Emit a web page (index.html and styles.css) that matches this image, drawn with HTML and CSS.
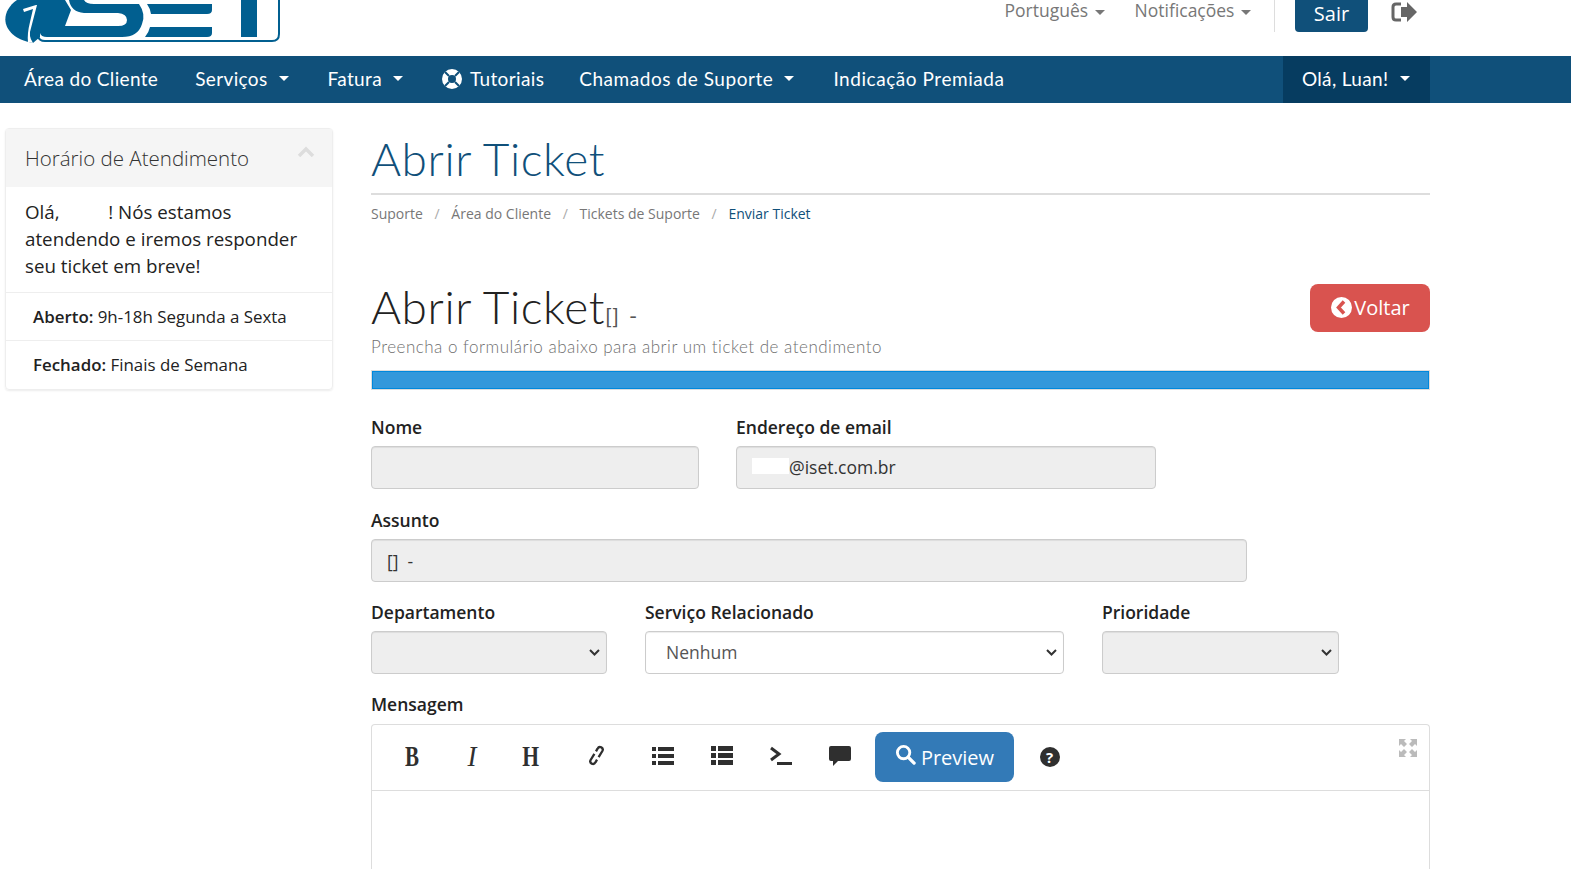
FILE: index.html
```html
<!DOCTYPE html>
<html lang="pt-BR">
<head>
    <meta charset="UTF-8">
    <title>Abrir Ticket</title>
    <link rel="stylesheet" href="styles.css">
</head>
<body>
    <header class="top">
        <svg class="logo" width="285" height="44" viewBox="0 0 285 44">
            <path fill="#015f90" d="M17 0C-3 14 3 38 33 43L40 37V0Z"/>
            <path fill="#fff" d="M23 9L36 5L37 5L31 28Q28 36 33 43L28 42Q27 34 30 22L33 9L24 12Z"/>
            <path fill="#015f90" d="M38 0H84Q86 4 94 4H139Q146 14 142 24Q138 37 122 37H47Q41 37 40 33L36 20Z"/>
            <path fill="#fff" d="M65 0H69Q71 12 84 13H118Q127 14 127 20Q127 26 118 26H65L71 10Z"/>
            <path fill="#015f90" d="M147 4H212V10Q212 14 207 14H151Q150 8 147 4ZM150 27H212V33Q212 37 207 37H145Q149 32 150 27ZM241 0H257V37H241Z"/>
            <path fill="none" stroke="#015f90" stroke-width="2" d="M38 33V36Q39 41 45 41H272Q279 41 279 34V0"/>
        </svg>
        <div class="top-right">
            <a class="top-link">Português <span class="caret"></span></a>
            <a class="top-link">Notificações <span class="caret"></span></a>
            <span class="top-sep"></span>
            <a class="btn-sair">Sair</a>
            <svg class="logout-icon" width="26" height="22" viewBox="0 0 26 22">
                <path fill="#666" d="M10 6H16V1L26 11L16 21V16H10Z"/>
                <path fill="none" stroke="#666" stroke-width="3" d="M10 3H5Q2 3 2 6V16Q2 19 5 19H10"/>
            </svg>
        </div>
    </header>

    <nav class="navbar">
        <a class="nav-item">Área do Cliente</a>
        <a class="nav-item">Serviços <span class="caret"></span></a>
        <a class="nav-item">Fatura <span class="caret"></span></a>
        <a class="nav-item nav-tut">
            <svg class="nav-icon" width="20" height="20" viewBox="0 0 20 20">
                <circle cx="10" cy="10" r="7" fill="none" stroke="#fff" stroke-width="6"/>
                <path stroke="#10507a" stroke-width="2" d="M3 3L7 7M17 3L13 7M3 17L7 13M17 17L13 13"/>
            </svg>
            Tutoriais
        </a>
        <a class="nav-item nav-wide">Chamados de Suporte <span class="caret"></span></a>
        <a class="nav-item nav-wide">Indicação Premiada</a>
        <a class="nav-item nav-user">Olá, Luan! <span class="caret"></span></a>
    </nav>

    <div class="page">
        <aside class="panel">
            <div class="panel-head">
                <span>Horário de Atendimento</span>
                <svg width="18" height="11" viewBox="0 0 18 11">
                    <path fill="none" stroke="#ddd" stroke-width="3.5" d="M2 10L9 3L16 10"/>
                </svg>
            </div>
            <p class="panel-text">Olá,&nbsp;&nbsp;&nbsp;&nbsp;&nbsp;&nbsp;&nbsp;&nbsp;&nbsp;&nbsp;! Nós estamos atendendo e iremos responder seu ticket em breve!</p>
            <div class="panel-row"><b>Aberto:</b> 9h-18h Segunda a Sexta</div>
            <div class="panel-row"><b>Fechado:</b> Finais de Semana</div>
        </aside>

        <main class="content">
            <h1 class="page-title">Abrir Ticket</h1>
            <ol class="crumbs">
                <li>Suporte</li>
                <li>Área do Cliente</li>
                <li>Tickets de Suporte</li>
                <li class="active">Enviar Ticket</li>
            </ol>

            <div class="ticket-head">
                <div>
                    <h2 class="ticket-title">Abrir Ticket<small>[] -</small></h2>
                    <p class="ticket-sub">Preencha o formulário abaixo para abrir um ticket de atendimento</p>
                </div>
                <a class="btn-voltar">
                    <svg width="21" height="21" viewBox="0 0 21 21">
                        <circle cx="10.5" cy="10.5" r="10.5" fill="#fff"/>
                        <path fill="none" stroke="#d9534f" stroke-width="3.5" d="M13 4.5L7.5 10.5L13 16.5"/>
                    </svg>Voltar
                </a>
            </div>
            <div class="blue-bar"></div>

            <form>
                <div class="row row-first">
                    <div class="field w-nome">
                        <label>Nome</label>
                        <input class="input" disabled>
                    </div>
                    <div class="field w-email">
                        <label>Endereço de email</label>
                        <div class="input email-box"><span class="mask"></span>@iset.com.br</div>
                    </div>
                </div>
                <div class="row">
                    <div class="field w-assunto">
                        <label>Assunto</label>
                        <input class="input" value="[]  -" disabled>
                    </div>
                </div>
                <div class="row row-select">
                    <div class="field w-sel">
                        <label>Departamento</label>
                        <select class="input" disabled><option></option></select>
                    </div>
                    <div class="field w-serv">
                        <label>Serviço Relacionado</label>
                        <select class="input on"><option>Nenhum</option></select>
                    </div>
                    <div class="field w-prio">
                        <label>Prioridade</label>
                        <select class="input" disabled><option></option></select>
                    </div>
                </div>

                <label class="msg-label">Mensagem</label>
                <div class="editor">
                    <div class="toolbar">
                        <span class="tool"><span class="glyph glyph-b">B</span></span>
                        <span class="tool"><span class="glyph glyph-i">I</span></span>
                        <span class="tool"><span class="glyph glyph-h">H</span></span>
                        <span class="tool tool-link">
                            <svg width="15" height="21" viewBox="0 0 14 20">
                                <g fill="none" stroke="#2f2f2f" stroke-width="2.200">
                                    <path d="M6.500 6L8 3.500Q9.200 1.200 11.500 2.200Q13.800 3.600 12.600 5.700L9 11.500"/>
                                    <path d="M7.500 14L6 16.500Q4.800 18.800 2.500 17.800Q.2 16.400 1.400 14.300L5 8.500"/>
                                </g>
                            </svg>
                        </span>
                        <span class="tool">
                            <svg width="22" height="20" viewBox="0 0 22 20">
                                <path fill="#2f2f2f" d="M0 1H4V5H0ZM6 1H22V5H6ZM0 8H4V12H0ZM6 8H22V12H6ZM0 15H4V19H0ZM6 15H22V19H6Z"/>
                            </svg>
                        </span>
                        <span class="tool">
                            <svg width="22" height="20" viewBox="0 0 22 20">
                                <path fill="#2f2f2f" d="M0 0H5V5H0ZM7 0H22V5H7ZM0 7H5V12H0ZM7 7H22V12H7ZM0 14H5V19H0ZM7 14H22V19H7Z"/>
                            </svg>
                        </span>
                        <span class="tool">
                            <svg width="22" height="20" viewBox="0 0 22 20">
                                <path fill="none" stroke="#2f2f2f" stroke-width="3" d="M1 2L9 8L1 14"/>
                                <path fill="#2f2f2f" d="M7 16H22V19H7Z"/>
                            </svg>
                        </span>
                        <span class="tool">
                            <svg width="22" height="20" viewBox="0 0 22 20">
                                <path fill="#2f2f2f" d="M2 0H20Q22 0 22 2V13Q22 15 20 15H9L4 20V15H2Q0 15 0 13V2Q0 0 2 0Z"/>
                            </svg>
                        </span>
                        <a class="btn-preview">
                            <svg width="21" height="21" viewBox="0 0 22 22">
                                <circle cx="9" cy="9" r="6.500" fill="none" stroke="#fff" stroke-width="3"/>
                                <path stroke="#fff" stroke-width="3.500" stroke-linecap="round" d="M14 14L20 20"/>
                            </svg>
                            Preview
                        </a>
                        <span class="tool tool-help"><span class="help-dot">?</span></span>
                        <svg class="tool-full" width="20" height="20" viewBox="0 0 20 20">
                            <path fill="#bbb" d="M1 1H8L6 3L9 6L6 9L3 6L1 8ZM19 1V8L17 6L14 9L11 6L14 3L12 1ZM1 19V12L3 14L6 11L9 14L6 17L8 19ZM19 19H12L14 17L11 14L14 11L17 14L19 12Z"/>
                        </svg>
                    </div>
                </div>
            </form>
        </main>
    </div>
</body>
</html>
```

FILE: styles.css
```css
html, body {
    height: 869px;
    overflow: hidden;
}
body {
    margin: 0;
    background: #fff;
    color: #222;
    font-family: "Open Sans", sans-serif;
}
.caret {
    display: inline-block;
    width: 0;
    height: 0;
    margin-left: 2px;
    vertical-align: middle;
    border-top: 5px solid currentColor;
    border-left: 5px solid transparent;
    border-right: 5px solid transparent;
}

/* top */
.top {
    display: flex;
    justify-content: space-between;
    height: 56px;
}
.top-right {
    display: flex;
    align-items: flex-start;
    margin-right: 154px;
    height: 32px;
}
.top-link {
    color: #777;
    font-size: 17.500px;
    line-height: 20px;
    margin-right: 30px;
}
.top-link + .top-link {
    margin-right: 23px;
}
.top-sep {
    width: 1px;
    height: 32px;
    background: #ddd;
    margin-right: 20px;
}
.btn-sair {
    width: 73px;
    height: 32px;
    line-height: 27px;
    text-align: center;
    font-size: 20px;
    color: #fff;
    background: #10507a;
    border-radius: 0 0 4px 4px;
}
.logout-icon {
    margin: 1px 0 0 23px;
}

/* menu */
.navbar {
    display: flex;
    height: 47px;
    padding-left: 5.500px;
    background: #10507a;
    color: #fff;
    font-family: Lato, sans-serif;
    font-size: 19px;
    letter-spacing: 0.35px;
}
.nav-item {
    display: flex;
    align-items: center;
    padding: 0 18.500px 2px;
}
.nav-icon {
    margin-right: 8px;
}
.nav-item .caret {
    margin: 0 2px 0 11px;
}
.nav-tut {
    padding-right: 16.500px;
}
.nav-wide {
    letter-spacing: 0.55px;
}
.nav-user {
    margin-left: auto;
    margin-right: 141px;
    background: #063c60;
}

/* colunas */
.page {
    display: flex;
    padding: 25px 141px 0 5px;
}
.panel {
    width: 328px;
    height: 262px;
    flex: none;
    box-sizing: border-box;
    border: 1px solid #eee;
    border-radius: 4px;
    box-shadow: 0 1px 2px rgba(0, 0, 0, 0.08);
}
.panel-head {
    display: flex;
    justify-content: space-between;
    height: 58px;
    padding: 0 17px 0 19px;
    background: #f5f5f5;
    color: #333;
    font-size: 20.500px;
    font-weight: 300;
    line-height: 58px;
}
.panel-head svg {
    margin-top: 17px;
}
.panel-text {
    margin: 0;
    padding: 11px 19px 0;
    height: 94px;
    border-bottom: 1px solid #eee;
    font-size: 18.760px;
    line-height: 27px;
}
.panel-row {
    height: 47px;
    line-height: 47px;
    padding-left: 27px;
    border-bottom: 1px solid #eee;
    font-size: 16.900px;
}
.panel-row:last-child {
    border-bottom: 0;
}
.panel-row b {
    font-weight: 600;
}
.content {
    width: 1059px;
    margin-left: 38px;
}
.page-title {
    margin: 0;
    height: 65px;
    border-bottom: 2px solid #ddd;
    color: #10507a;
    font-family: Lato, sans-serif;
    font-size: 46px;
    font-weight: 300;
    letter-spacing: 0.6px;
    line-height: 62px;
}
.crumbs {
    display: flex;
    list-style: none;
    margin: 0;
    padding: 9px 0 0;
    color: #777;
    font-size: 14px;
    line-height: 20px;
}
.crumbs li + li::before {
    content: "/";
    color: #aaa;
    padding: 0 11.700px;
}
.crumbs .active {
    color: #10507a;
}
.ticket-head {
    display: flex;
    justify-content: space-between;
    margin-top: 59px;
}
.ticket-title {
    margin: 0;
    font-family: Lato, sans-serif;
    font-size: 46px;
    font-weight: 300;
    letter-spacing: 0.6px;
    line-height: 48px;
}
.ticket-title small {
    color: #555;
    font-size: 22px;
    font-weight: 400;
    line-height: 1;
    word-spacing: 3px;
}
.ticket-sub {
    margin: 6px 0 0;
    color: #6f6f6f;
    font-family: Lato, sans-serif;
    font-size: 17px;
    font-weight: 300;
    letter-spacing: 0.5px;
    line-height: 20px;
}
.btn-voltar {
    display: flex;
    align-items: center;
    justify-content: center;
    gap: 2px;
    box-sizing: border-box;
    width: 120px;
    height: 48px;
    margin-top: 1px;
    padding: 0 0 1px 1px;
    border-radius: 8px;
    background: #d9534f;
    color: #fff;
    font-size: 20px;
}
.blue-bar {
    height: 16px;
    margin: 14px 1px 0;
    border: 1px solid #0088dd;
    outline: 1px solid #ddd;
    background: #3498db;
}

/* formulario */
form {
    margin-top: 26px;
}
.row {
    display: flex;
    gap: 37px;
    margin-bottom: 18px;
}
.row-first {
    margin-bottom: 19px;
}
.row-select {
    gap: 38px;
}
.w-nome { width: 328px; }
.w-email { width: 420px; }
.w-assunto { width: 876px; }
.w-sel { width: 236px; }
.w-serv { width: 419px; }
.w-prio { width: 237px; }
label {
    display: block;
    height: 24px;
    margin-bottom: 7px;
    font-size: 17.500px;
    font-weight: 600;
    line-height: 24px;
}
.input {
    display: block;
    box-sizing: border-box;
    width: 100%;
    height: 43px;
    padding: 0 15px;
    border: 1px solid #ccc;
    border-radius: 4px;
    background: #eee;
    color: #333;
    font-family: "Open Sans", sans-serif;
    font-size: 17.500px;
    line-height: 41px;
    box-shadow: inset 0 1px 1px rgba(0, 0, 0, 0.075);
    opacity: 1;
}
select.input {
    appearance: none;
    padding: 0 20px;
    background-image: url("data:image/svg+xml,%3Csvg xmlns='http://www.w3.org/2000/svg' width='11' height='7'%3E%3Cpath fill='none' stroke='%23333' stroke-width='2' d='M1 1l4.500 4.500L10 1'/%3E%3C/svg%3E");
    background-repeat: no-repeat;
    background-position: right 6px center;
}
.input.on {
    background-color: #fff;
    color: #555;
}
.mask {
    display: inline-block;
    width: 37px;
    height: 16px;
    background: #fff;
}
.msg-label {
    margin-bottom: 8px;
}
.editor {
    height: 146px;
    box-sizing: border-box;
    border: 1px solid #ddd;
    border-bottom: 0;
    border-radius: 4px 4px 0 0;
}
.toolbar {
    position: relative;
    display: flex;
    align-items: center;
    height: 61px;
    padding: 0 0 4px 11px;
    border-bottom: 1px solid #ddd;
}
.tool {
    display: flex;
    align-items: center;
    justify-content: center;
    width: 59px;
}
.glyph {
    display: block;
    color: #2f2f2f;
    font-family: "Liberation Serif", serif;
    font-size: 30px;
    line-height: 24px;
}
.glyph-b {
    font-weight: 700;
    transform: scaleX(0.7);
}
.glyph-i {
    font-style: italic;
    transform: scaleX(0.9);
}
.glyph-h {
    font-weight: 700;
    transform: scaleX(0.72);
}
.tool-link {
    margin: 0 7px;
}
.btn-preview {
    display: flex;
    align-items: center;
    gap: 5px;
    justify-content: center;
    width: 139px;
    height: 50px;
    margin: 0 0 -3px 6px;
    border-radius: 8px;
    background: #337ab7;
    color: #fff;
    font-family: "Open Sans", sans-serif;
    font-size: 20px;
}
.btn-preview svg {
    margin-top: -6px;
}
.tool-help {
    margin: 3px 0 0 6px;
}
.help-dot {
    width: 20px;
    height: 20px;
    border-radius: 50%;
    background: #2f2f2f;
    color: #fff;
    font-size: 15px;
    font-weight: 700;
    line-height: 20px;
    text-align: center;
}
.tool-full {
    position: absolute;
    top: 13px;
    right: 11px;
}
```
